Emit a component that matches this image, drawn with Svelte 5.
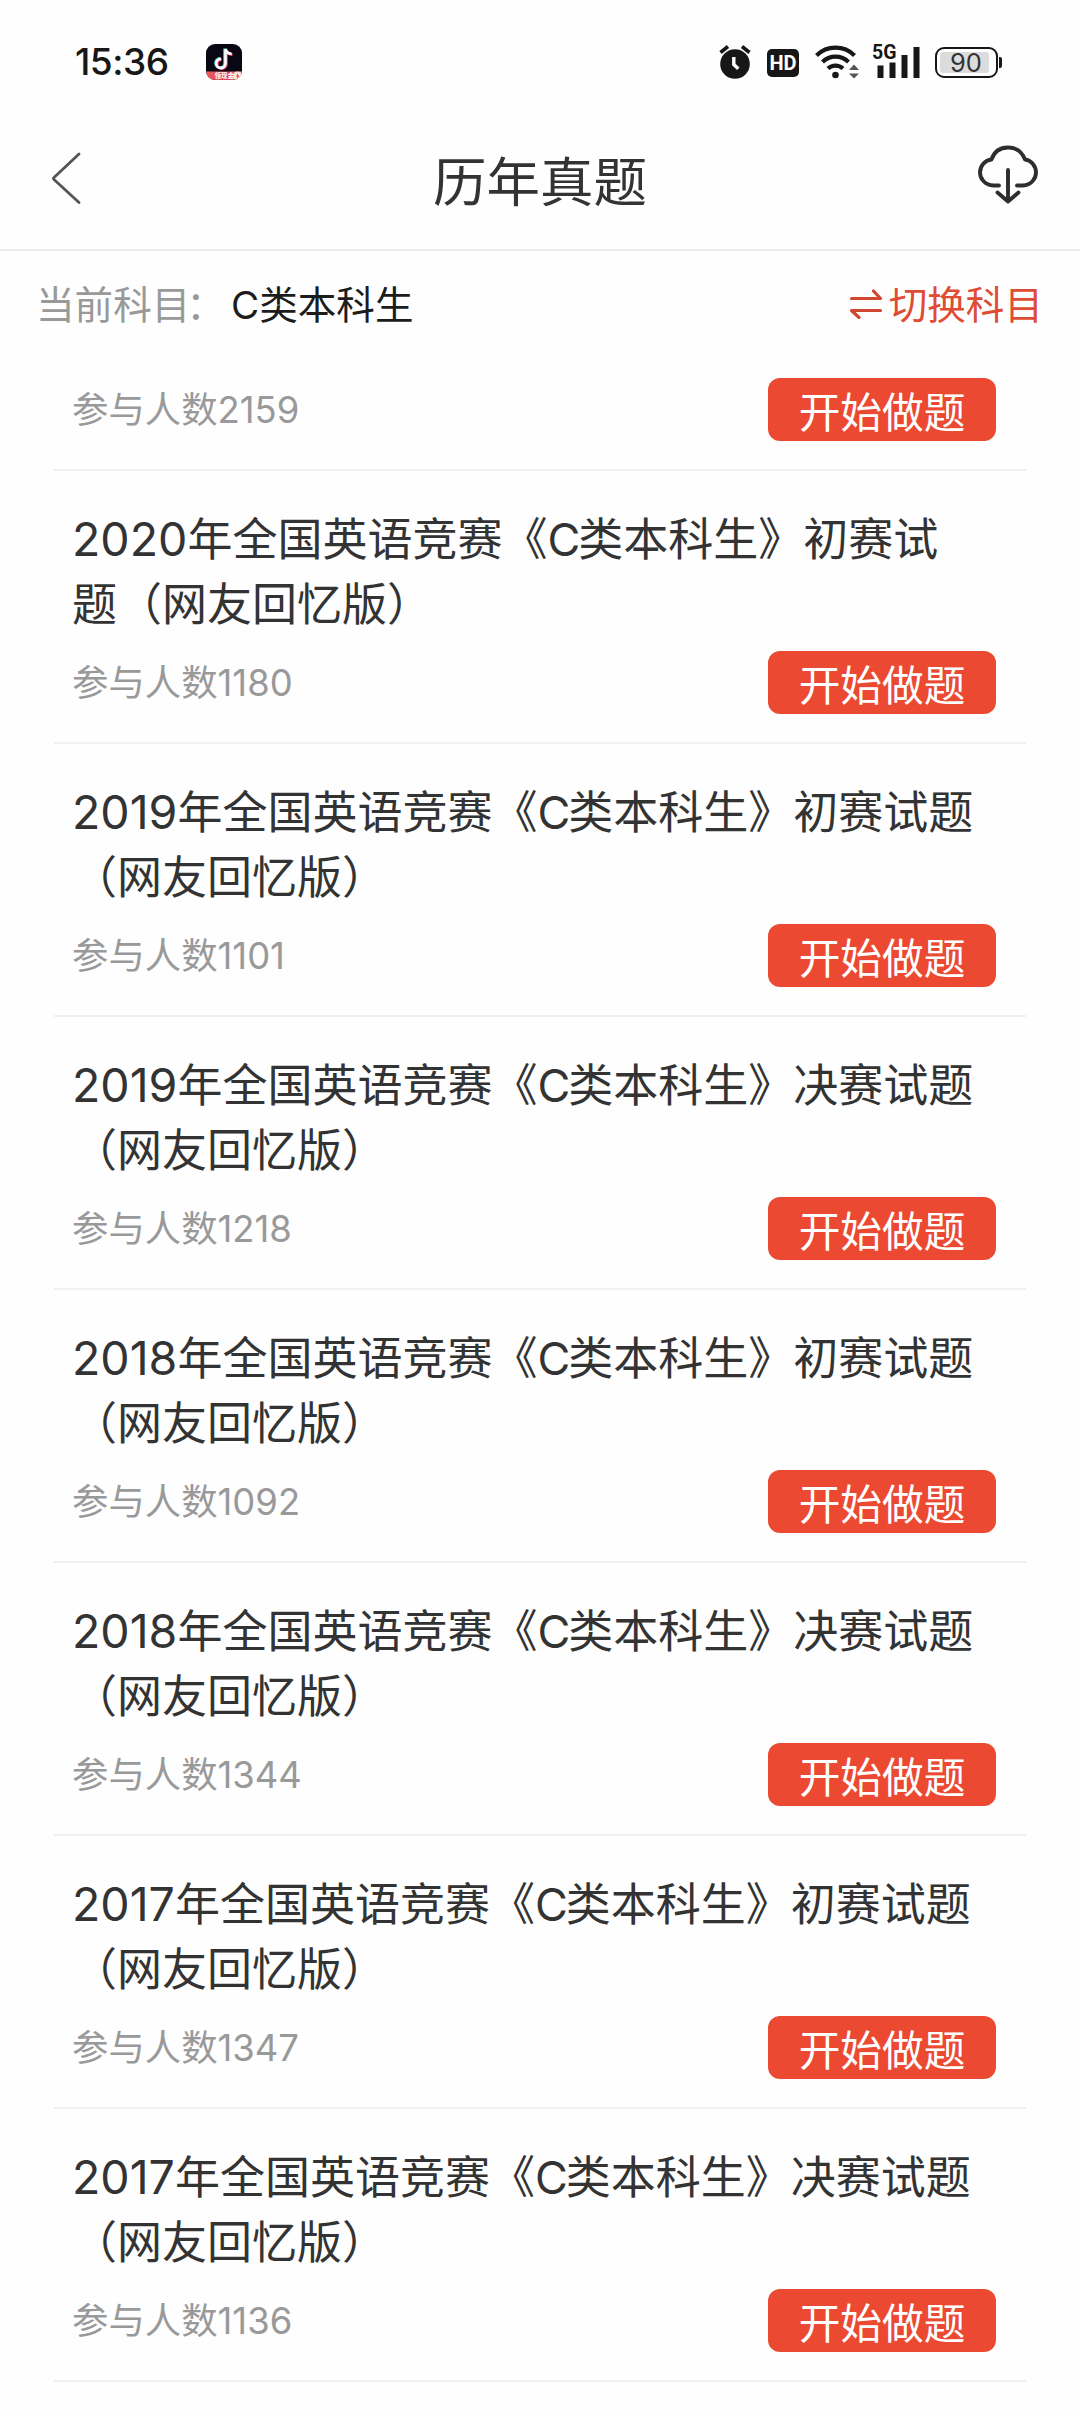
<script>
  const note = '（网友回忆版）';
  const exams = [
    { id: 0, people: 2159 },
    { id: 1, year: '2020', round: '初赛试', tail: '题' + note, people: 1180 },
    { id: 2, year: '2019', round: '初赛试题', tail: note, people: 1101 },
    { id: 3, year: '2019', round: '决赛试题', tail: note, people: 1218 },
    { id: 4, year: '2018', round: '初赛试题', tail: note, people: 1092 },
    { id: 5, year: '2018', round: '决赛试题', tail: note, people: 1344 },
    { id: 6, year: '2017', round: '初赛试题', tail: note, people: 1347 },
    { id: 7, year: '2017', round: '决赛试题', tail: note, people: 1136 }
  ];
</script>

<div class="screen">
  <div class="status">
    <span class="time">15:36</span>
    <svg class="app" width="36" height="36" viewBox="0 0 36 36">
      <defs>
        <clipPath id="tile"><rect width="36" height="36" rx="9" /></clipPath>
        <linearGradient id="band" x1="0" x2="1"><stop offset="0" stop-color="#f0605a" /><stop offset=".6" stop-color="#d8385c" /><stop offset="1" stop-color="#f2a08c" /></linearGradient>
      </defs>
      <g clip-path="url(#tile)">
        <rect width="36" height="36" fill="#0a0714" />
        <g fill="none" stroke-width="3">
          <path d="M18.800 4.500v14.500a4.600 4.600 0 1 1-4.600-4.600M18.800 4.500c.5 3 3 4.800 6.200 5" stroke="#3fe0e0" />
          <path d="M20.300 5.500v14.500a4.600 4.600 0 1 1-4.600-4.600M20.300 5.500c.5 3 3 4.800 6.200 5" stroke="#f0365f" />
          <path d="M19.500 5v14.500a4.600 4.600 0 1 1-4.600-4.600M19.500 5c.5 3 3 4.800 6.200 5" stroke="#fff" stroke-width="2.600" />
        </g>
        <rect y="27.500" width="36" height="9" fill="url(#band)" />
        <circle cx="31.500" cy="32" r="4.500" fill="#fde6dc" />
        <path d="M32 29l-2 3.500h1.500l-.5 3 2.500-4h-1.700z" fill="#e0403c" />
        <text x="8.500" y="34.300" class="tag">领现金</text>
      </g>
    </svg>
    <div class="tray">
      <svg width="32" height="36" viewBox="0 0 32 36">
        <circle cx="16" cy="20" r="14.800" fill="#171717" />
        <path d="M1.500 8.500L9 2.500M30.500 8.500L23 2.500" stroke="#171717" stroke-width="3.600" />
        <path d="M14.800 13v7.500l4.500 4.300" fill="none" stroke="#fff" stroke-width="3.400" />
      </svg>
      <span class="hd">HD</span>
      <svg class="wifi" width="45" height="36" viewBox="0 0 45 36">
        <g fill="none" stroke="#171717" stroke-width="4.200">
          <path d="M1.500 11.500a27 27 0 0 1 38 0" />
          <path d="M7.500 18a18.500 18.500 0 0 1 26 0" />
          <path d="M13 24.500a11 11 0 0 1 15 0" />
        </g>
        <circle cx="20.500" cy="31" r="3.300" fill="#171717" />
        <path d="M34 26l5-5.500 5 5.500zM34 29.500h10l-5 5z" fill="#555" />
      </svg>
      <div class="cell">
        <span>5G</span>
        <svg width="48" height="36" viewBox="0 0 48 36">
          <path d="M4.500 21.500h6V34h-6zM16.500 18.500h6V34h-6zM28.500 11h6v23h-6zM40.500 3h6v31h-6z" fill="#171717" />
        </svg>
      </div>
      <div class="battery"><span>90</span></div>
      <i class="nub"></i>
    </div>
  </div>

  <header>
    <svg width="30" height="54" viewBox="0 0 30 54" fill="none" stroke="#555" stroke-width="2.800" stroke-linecap="round" stroke-linejoin="round">
      <path d="M28 3L3 26.500Q2 27.500 3 28.500L28 51.500" />
    </svg>
    <h1>历年真题</h1>
    <svg width="62" height="60" viewBox="0 0 62 60" fill="none" stroke="#2e2e30" stroke-width="3.900" stroke-linecap="round" stroke-linejoin="round">
      <path d="M22 41.500h-5.500C8 41 3 35 3 28.500C3 22 8 16 14.500 15.500C17 8 23 3.500 31 3.500S45 8 48 15.500C54 16 59 22 59 28.500S54 41 46 41.500h-6" />
      <path d="M31 26v31M20.500 48.500L31 57.500l10.500-9" />
    </svg>
  </header>

  <div class="subject">
    <span class="label">当前科目<span class="colon">：</span></span>
    <span class="value">C类本科生</span>
    <div class="switch">
      <svg width="34" height="30" viewBox="0 0 34 30" fill="none" stroke="#d2472f" stroke-width="3.200" stroke-linecap="round" stroke-linejoin="round">
        <path d="M2.500 9.500h29L24.500 2M31.500 21.500h-29l7.500 7" />
      </svg>
      <span>切换科目</span>
    </div>
  </div>

  <main>
    {#each exams as exam (exam.id)}
      <article>
        {#if exam.year}
          <h2>
            <div><span class="year">{exam.year}</span>年全国英语竞赛《<span class="grade">C</span>类本科生》{exam.round}</div>
            <div>{exam.tail}</div>
          </h2>
        {/if}
        <div class="row">
          <span class="people">参与人数{exam.people}</span>
          <button>开始做题</button>
        </div>
      </article>
    {/each}
  </main>
</div>

<style>
  :global(body) { background: #fefefe; }
  .screen {
    width: 1080px;
    height: 2412px;
    overflow: hidden;
    background: #fefefe;
    color: #333;
    font-family: Inter, "Noto Sans CJK SC", sans-serif;
  }
  .status { height: 124px; display: flex; align-items: center; padding: 0 78px 0 75px; box-sizing: border-box; }
  .time { width: 131px; font-size: 37px; font-weight: 500; color: #171717; line-height: 40px; letter-spacing: -0.500px; }
  .tag { font-size: 6.500px; font-weight: 700; fill: #fff; }
  .tray { display: flex; align-items: center; margin-left: auto; height: 36px; }
  .hd {
    width: 32px; height: 28px; margin: 2px 0 0 16px; border-radius: 5px;
    background: #171717; color: #fff; font: 700 20px/28px Roboto, sans-serif; text-align: center;
  }
  .wifi { margin-left: 16px; }
  .cell { position: relative; width: 48px; height: 36px; margin-left: 13px; }
  .cell span { position: absolute; left: -1px; top: -1px; font: 700 19.500px/19px Roboto, sans-serif; color: #171717; background: #fefefe; height: 18px; }
  .battery {
    width: 63px; height: 31px; box-sizing: border-box; margin-left: 14px;
    border: 2.500px solid #171717; border-radius: 9px; padding: 3px;
    display: flex;
  }
  .battery span {
    flex: 1; margin-right: 4px; background: #dcdcdc; border-radius: 3px;
    font-size: 25.500px; line-height: 21px; text-align: center; padding-left: 3px; color: #333;
  }
  .nub { width: 3px; height: 11px; margin-left: 1px; background: #171717; border-radius: 0 2px 2px 0; }

  header {
    height: 127px; box-sizing: border-box; border-bottom: 2px solid #ebebeb;
    padding: 0 41px 0 51px; display: grid; grid-template-columns: 62px 1fr 62px;
    align-items: start;
  }
  header svg { margin-top: 27px; }
  header svg:last-child { margin: 20px 0 0 0; }
  h1 { margin: 19px 0 0; font-size: 53.500px; line-height: 80px; font-weight: 400; text-align: center; text-indent: -10px; }

  .subject { height: 127px; display: flex; padding: 26px 37px 0 36px; box-sizing: border-box; font-size: 38.600px; line-height: 57px; }
  .label { width: 195px; color: #999; white-space: nowrap; }
  .colon { margin-left: -4px; }
  .value { color: #1c1c1c; }
  .switch { margin-left: auto; display: flex; color: #df4b33; gap: 6px; }
  .switch svg { margin-top: 12px; }

  main { padding: 0 54px; }
  article { height: 273px; box-sizing: border-box; border-bottom: 2px solid #f0f0f0; padding: 36px 30px 0 18px; }
  article:first-child { height: 93px; padding-top: 0; }
  h2 { margin: 0 0 14px; font-size: 45px; line-height: 65px; font-weight: 400; }
  h2 div { height: 65px; white-space: nowrap; }
  .year { font-size: 46.500px; line-height: 1; }
  .grade { letter-spacing: -2px; }
  .row { display: flex; justify-content: space-between; height: 63px; }
  .people { color: #999; font-size: 36.400px; line-height: 65px; }
  button {
    width: 228px; height: 63px; border: 0; border-radius: 12px; padding: 1px 0 0;
    background: #ec4932; color: #fff; font: 400 41.700px/60px "Noto Sans CJK SC", sans-serif;
  }
</style>
